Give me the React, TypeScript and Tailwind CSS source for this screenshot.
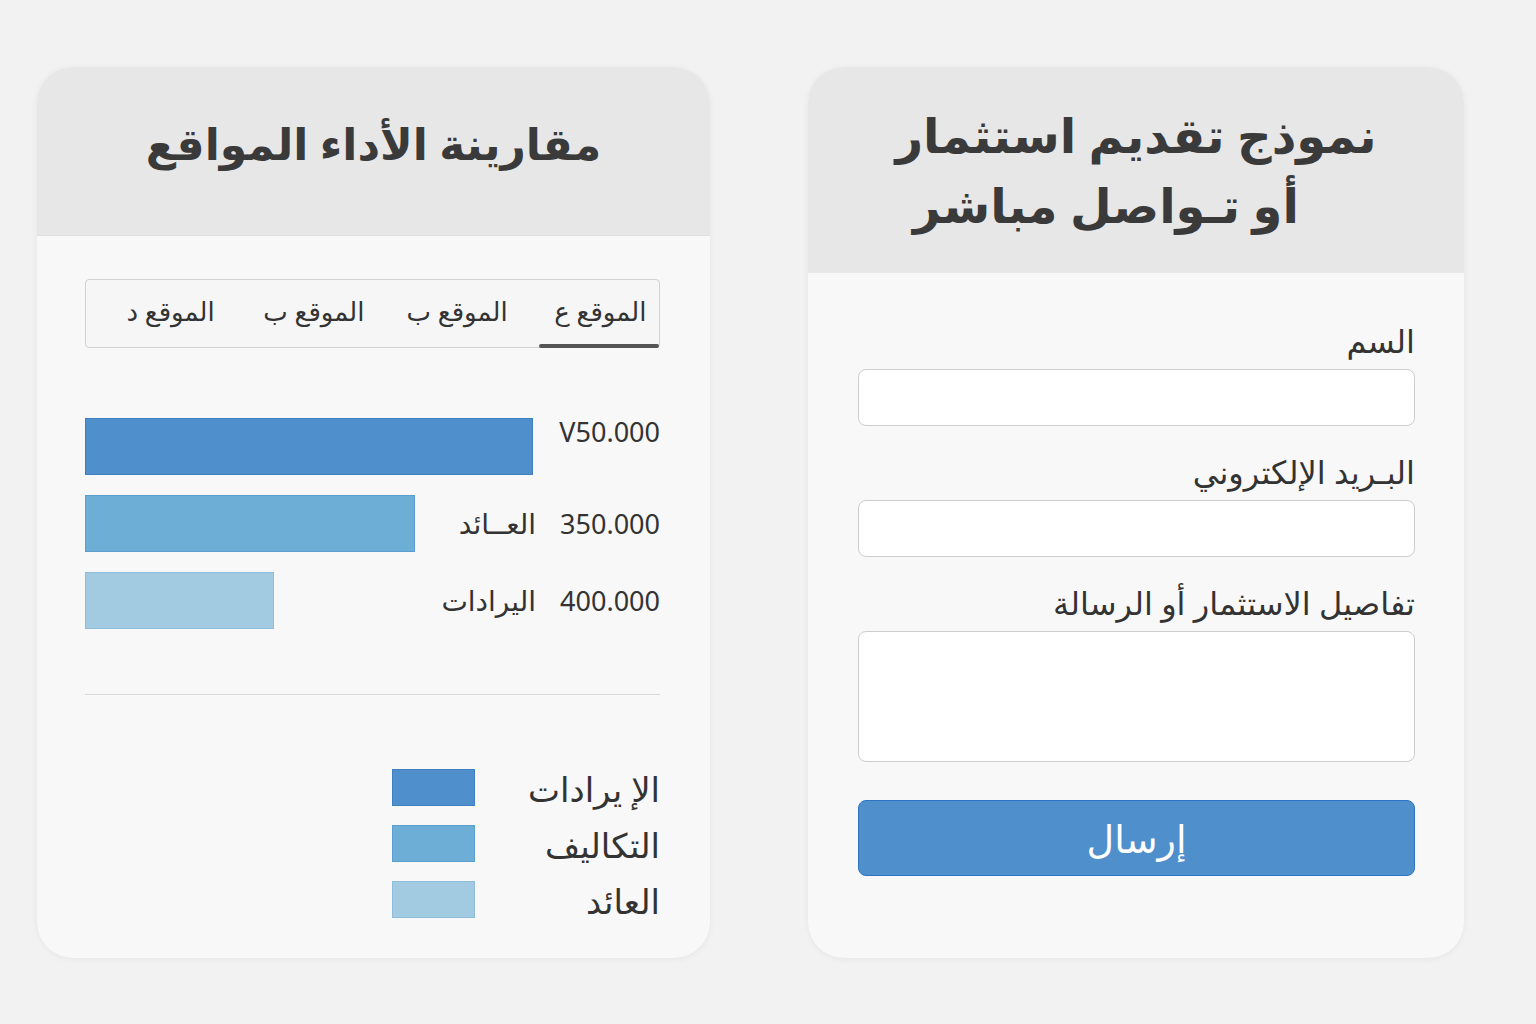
import { useState } from "react";

const tabs = ["الموقع ع", "الموقع ب", "الموقع ب", "الموقع د"];

const bars = [
  { label: "", value: "V50.000", width: "w-[448px]", color: "bg-[#4f8fcc] border-[#3f7fc2]", top: true },
  { label: "العــائد", value: "350.000", width: "w-[330px]", color: "bg-[#6daed6] border-[#5a9fd0]", top: false },
  { label: "اليرادات", value: "400.000", width: "w-[189px]", color: "bg-[#a2cbe2] border-[#8fbedd]", top: false },
];

const legend = [
  { label: "الإ يرادات", color: "bg-[#4f8fcc] border-[#3f7fc2]" },
  { label: "التكاليف", color: "bg-[#6daed6] border-[#5a9fd0]" },
  { label: "العائد", color: "bg-[#a2cbe2] border-[#8fbedd]" },
];

function ComparisonCard() {
  const [active, setActive] = useState(0);

  return (
    <div className="w-[673px] h-[891px] rounded-[36px] overflow-hidden bg-[#f8f8f8] shadow-[0_1px_6px_rgba(0,0,0,0.06)] flex flex-col">
      <div className="h-[169px] bg-[#e7e7e7] flex items-center justify-center border-b border-[#e0e0e0]">
        <h2 dir="rtl" className="text-[44px] font-bold text-[#3a3a3a] -mt-[16px]">
          مقارينة الأداء المواقع
        </h2>
      </div>

      <div className="flex-1 pl-[48px] pr-[50px] pt-[43px]">
        <div dir="rtl" className="h-[69px] flex border border-[#d2d2d2] rounded-[4px] bg-[#f6f6f6]">
          {tabs.map((t, i) => (
            <button
              key={i}
              onClick={() => setActive(i)}
              className="relative flex-1 flex items-center justify-center pl-[26px] pb-[4px] text-[26px] text-[#333]"
            >
              {t}
              {active === i && (
                <span className="absolute bottom-[-1px] right-0 w-[120px] h-[4px] bg-[#555] rounded-sm" />
              )}
            </button>
          ))}
        </div>

        <div className="mt-[70px] flex flex-col gap-[20px]">
          {bars.map((b, i) => (
            <div key={i} className="flex items-center h-[57px]">
              <div className={`${b.width} h-[57px] border ${b.color}`} />
              <div dir="rtl" className="flex-1 text-right text-[28px] text-[#333] leading-none pb-[2px]">
                {b.label}
              </div>
              <div
                className={`w-[124px] text-right text-[27px] text-[#333] leading-none ${b.top ? "self-start" : ""}`}
              >
                {b.value}
              </div>
            </div>
          ))}
        </div>

        <div className="mt-[65px] h-px bg-[#d8d8d8]" />

        <div className="mt-[74px] flex flex-col gap-[19px]">
          {legend.map((l, i) => (
            <div key={i} className="flex justify-end items-center">
              <div className={`w-[83px] h-[37px] border ${l.color}`} />
              <div dir="rtl" className="w-[185px] text-right text-[34px] text-[#333] leading-none pt-[3px]">
                {l.label}
              </div>
            </div>
          ))}
        </div>
      </div>
    </div>
  );
}

function Field({ label, tall }: { label: string; tall?: boolean }) {
  return (
    <div className="flex flex-col">
      <label dir="rtl" className="text-right text-[32px] text-[#333] leading-none mb-[12px]">
        {label}
      </label>
      {tall ? (
        <textarea className="h-[131px] w-full rounded-[8px] border border-[#cdcdcd] bg-white resize-none" />
      ) : (
        <input className="h-[57px] w-full rounded-[8px] border border-[#cdcdcd] bg-white" />
      )}
    </div>
  );
}

function ContactCard() {
  return (
    <div className="w-[656px] h-[891px] rounded-[36px] overflow-hidden bg-[#f8f8f8] shadow-[0_1px_6px_rgba(0,0,0,0.06)] flex flex-col">
      <div className="h-[206px] bg-[#e7e7e7] flex items-center justify-center">
        <h2 dir="rtl" className="text-[48px] font-bold text-[#3a3a3a] leading-[70px] text-center">
          نموذج تقديم استثمار
          <br />
          <span className="mr-[60px]">أو  تـواصل مباشر</span>
        </h2>
      </div>

      <div className="flex-1 pl-[50px] pr-[49px] pt-[52px] flex flex-col gap-[30px]">
        <Field label="السم" />
        <Field label="البـريد الإلكتروني" />
        <Field label="تفاصيل الاستثمار أو الرسالة" tall />
        <button className="mt-[8px] h-[76px] w-full rounded-[8px] bg-[#4f8fcc] border border-[#2f74c4] text-white text-[38px] leading-none">
          إرسال
        </button>
      </div>
    </div>
  );
}

export default function App() {
  return (
    <div
      className="w-[1536px] h-[1024px] bg-[#f2f2f2] flex pl-[37px] pt-[67px] gap-[98px]"
      style={{ fontFamily: '"Noto Sans", "DejaVu Sans", sans-serif' }}
    >
      <ComparisonCard />
      <ContactCard />
    </div>
  );
}
